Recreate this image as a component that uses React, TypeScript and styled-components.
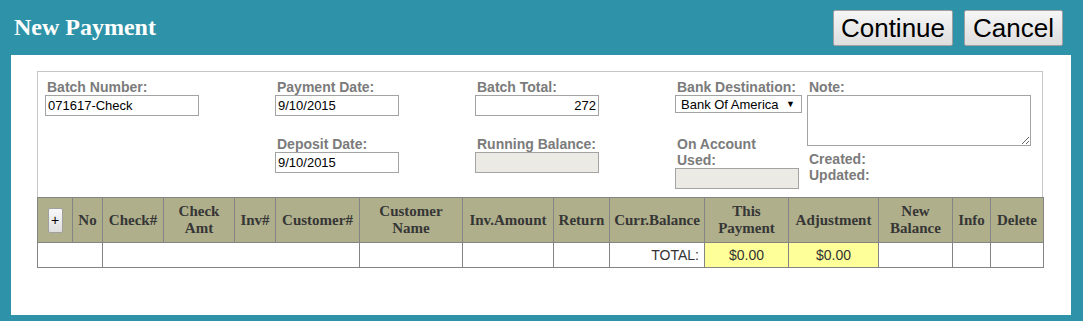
import React from 'react';
import styled, { createGlobalStyle } from 'styled-components';

const GlobalStyle = createGlobalStyle`
  html, body {
    margin: 0;
    padding: 0;
    background: #2e93a8;
  }
`;

const Page = styled.div`
  background: #2e93a8;
  height: 321px;
  box-sizing: border-box;
  padding: 0 12px 6px 11px;
  display: flex;
  flex-direction: column;
`;

const Header = styled.div`
  height: 55px;
  display: flex;
  align-items: flex-start;
  padding: 0 8px 0 3px;
`;

const Title = styled.h1`
  margin: 15px 0 0 0;
  font-family: "Liberation Serif", serif;
  font-weight: bold;
  font-size: 24px;
  line-height: 24px;
  color: #fff;
  flex: 1;
`;

const Actions = styled.div`
  display: flex;
  gap: 11px;
  margin-top: 10px;
`;

const BigButton = styled.button<{ $w: number }>`
  width: ${(p) => p.$w}px;
  height: 36px;
  padding: 0;
  border: 1px solid #a0a0a0;
  border-radius: 2px;
  background: linear-gradient(#f6f6f6, #dedede);
  font-family: "Liberation Sans", Arial, sans-serif;
  font-size: 26px;
  color: #000;
`;

const Panel = styled.div`
  flex: 1;
  background: #fff;
  padding: 16px 28px 0 26px;
`;

const Wrapper = styled.div`
  width: 1006px;
`;

const FormBox = styled.div`
  border: 1px solid #c6c6c6;
  border-bottom: none;
  padding: 7px 0 8px 7px;
  display: grid;
  grid-template-columns: 230px 200px 200px 132px 1fr;
  grid-template-rows: auto auto;
  row-gap: 20px;
  align-items: start;
`;

const Field = styled.div<{ $span?: boolean }>`
  display: flex;
  flex-direction: column;
  align-items: flex-start;
  ${(p) => (p.$span ? 'grid-row: 1 / span 2; grid-column: 5;' : '')}
`;

const Label = styled.div`
  font-family: "Liberation Sans", Arial, sans-serif;
  font-weight: bold;
  font-size: 14px;
  line-height: 16px;
  color: #7b7b7b;
  padding-left: 2px;
`;

const Input = styled.input<{ $w?: number; $right?: boolean }>`
  box-sizing: border-box;
  width: ${(p) => p.$w ?? 124}px;
  height: 21px;
  margin: 0;
  padding: 1px 2px;
  border: 1px solid #a3a3a3;
  border-radius: 0;
  font-family: "Liberation Sans", Arial, sans-serif;
  font-size: 13px;
  color: #000;
  text-align: ${(p) => (p.$right ? 'right' : 'left')};
  &:disabled {
    background: #ebeae4;
  }
`;

const Select = styled.div`
  box-sizing: border-box;
  width: 127px;
  height: 18px;
  border: 1px solid #a3a3a3;
  display: flex;
  align-items: center;
  justify-content: space-between;
  padding: 0 6px 0 5px;
  font-family: "Liberation Sans", Arial, sans-serif;
  font-size: 13px;
  color: #000;
`;

const Arrow = styled.span`
  font-size: 9px;
`;

const Note = styled.textarea`
  box-sizing: border-box;
  display: block;
  width: 224px;
  height: 51px;
  margin: 0 0 5px 0;
  border: 1px solid #a3a3a3;
  border-radius: 0;
`;

const Grid = styled.table`
  width: 1006px;
  border-collapse: collapse;
  table-layout: fixed;
  border: 1px solid #848484;
`;

const Th = styled.th`
  background: #afaf8b;
  border: 1px solid #848484;
  height: 45px;
  padding: 0 1px;
  font-family: "Liberation Serif", serif;
  font-weight: bold;
  font-size: 15px;
  line-height: 17px;
  color: #363636;
  text-align: center;
  box-sizing: border-box;
`;

const Td = styled.td<{ $yellow?: boolean; $align?: string }>`
  border: 1px solid #848484;
  height: 25px;
  padding: 0 5px;
  box-sizing: border-box;
  font-family: "Liberation Sans", Arial, sans-serif;
  font-size: 14px;
  color: #333;
  background: ${(p) => (p.$yellow ? '#ffff99' : '#fff')};
  text-align: ${(p) => p.$align ?? 'left'};
`;

const AddButton = styled.button`
  width: 15px;
  height: 25px;
  padding: 0;
  border: 1px solid #a0a0a0;
  border-radius: 2px;
  background: linear-gradient(#f8f8f8, #e0e0e0);
  font-family: "Liberation Sans", Arial, sans-serif;
  font-size: 14px;
  color: #000;
  vertical-align: middle;
`;

const widths = [35, 30, 61, 71, 41, 84, 103, 91, 56, 95, 84, 90, 74, 38, 53];

const headers: React.ReactNode[] = [
  null,
  'No',
  'Check#',
  <>Check<br />Amt</>,
  'Inv#',
  'Customer#',
  <>Customer<br />Name</>,
  'Inv.Amount',
  'Return',
  'Curr.Balance',
  <>This<br />Payment</>,
  'Adjustment',
  <>New<br />Balance</>,
  'Info',
  'Delete',
];

const App = () => {
  return (
    <Page>
      <GlobalStyle />
      <Header>
        <Title>New Payment</Title>
        <Actions>
          <BigButton $w={120}>Continue</BigButton>
          <BigButton $w={99}>Cancel</BigButton>
        </Actions>
      </Header>
      <Panel>
        <Wrapper>
          <FormBox>
            <Field>
              <Label>Batch Number:</Label>
              <Input $w={154} defaultValue="071617-Check" />
            </Field>
            <Field>
              <Label>Payment Date:</Label>
              <Input defaultValue="9/10/2015" />
            </Field>
            <Field>
              <Label>Batch Total:</Label>
              <Input $right defaultValue="272" />
            </Field>
            <Field>
              <Label>Bank Destination:</Label>
              <Select>
                <span>Bank Of America</span>
                <Arrow>▼</Arrow>
              </Select>
            </Field>
            <Field $span>
              <Label>Note:</Label>
              <Note />
              <Label>Created:</Label>
              <Label>Updated:</Label>
            </Field>
            <div />
            <Field>
              <Label>Deposit Date:</Label>
              <Input defaultValue="9/10/2015" />
            </Field>
            <Field>
              <Label>Running Balance:</Label>
              <Input disabled />
            </Field>
            <Field>
              <Label>On Account<br />Used:</Label>
              <Input disabled />
            </Field>
          </FormBox>
          <Grid>
            <colgroup>
              {widths.map((w, i) => (
                <col key={i} style={{ width: w }} />
              ))}
            </colgroup>
            <thead>
              <tr>
                {headers.map((h, i) => (
                  <Th key={i}>{i === 0 ? <AddButton>+</AddButton> : h}</Th>
                ))}
              </tr>
            </thead>
            <tbody>
              <tr>
                <Td colSpan={2} />
                <Td colSpan={4} />
                <Td />
                <Td />
                <Td />
                <Td $align="right">TOTAL:</Td>
                <Td $yellow $align="center">$0.00</Td>
                <Td $yellow $align="center">$0.00</Td>
                <Td />
                <Td />
                <Td />
              </tr>
            </tbody>
          </Grid>
        </Wrapper>
      </Panel>
    </Page>
  );
};

export default App;
